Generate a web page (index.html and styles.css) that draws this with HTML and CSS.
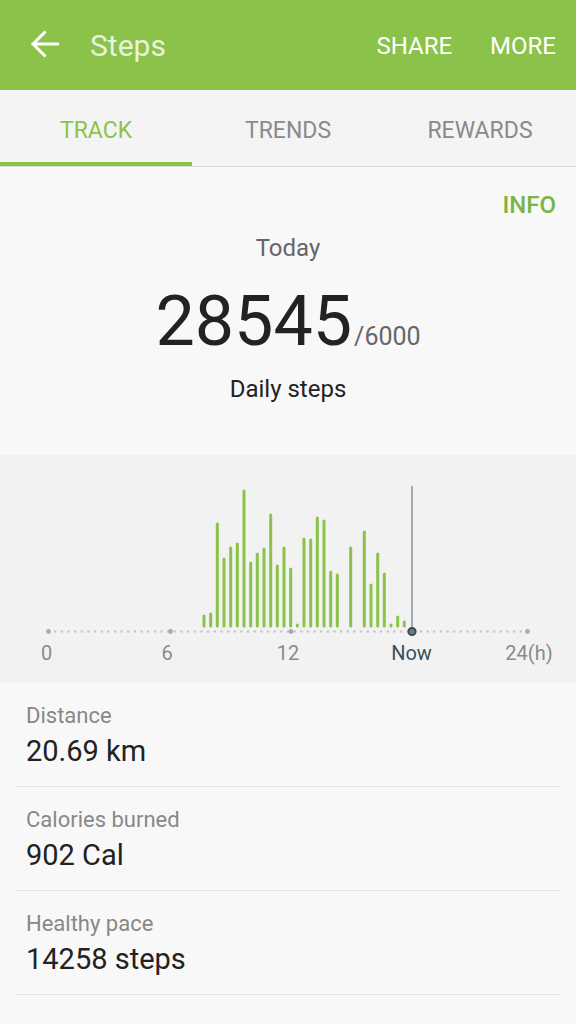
FILE: index.html
```html
<!DOCTYPE html>
<html lang="en">
<head>
<meta charset="utf-8">
<title>Steps</title>
<link rel="stylesheet" href="styles.css">
</head>
<body>
<div class="screen">
  <header class="appbar">
    <svg class="back" width="28" height="28" viewBox="0 0 28 28" aria-hidden="true">
      <path d="M2 13 H27 M13.5 1.5 L2 13 L13.5 24.5" fill="none" stroke="#fff" stroke-width="3" stroke-linecap="square" stroke-linejoin="miter"/>
    </svg>
    <h1 class="title">Steps</h1>
    <nav class="actions">
      <span class="action">SHARE</span>
      <span class="action">MORE</span>
    </nav>
  </header>

  <div class="tabs">
    <div class="tab tab-active">TRACK</div>
    <div class="tab">TRENDS</div>
    <div class="tab">REWARDS</div>
  </div>

  <section class="summary">
    <div class="info">INFO</div>
    <div class="today">Today</div>
    <div class="count"><span class="count-num">28545</span><span class="count-goal">/6000</span></div>
    <div class="count-label">Daily steps</div>
  </section>

  <section class="chart">
    <svg class="chart-svg" width="576" height="228" viewBox="0 455 576 228">
      <line x1="48.5" y1="631.5" x2="527.5" y2="631.5" stroke="#c6c6c6" stroke-width="2.6" stroke-linecap="round" stroke-dasharray="0 6.652"/>
      <circle cx="48.5" cy="631.5" r="2.4" fill="#aaaaaa"/>
      <circle cx="170.5" cy="631.5" r="2.4" fill="#aaaaaa"/>
      <circle cx="291" cy="631.5" r="2.4" fill="#aaaaaa"/>
      <circle cx="527.5" cy="631.5" r="2.4" fill="#aaaaaa"/>
      <g stroke="#8bc34a" stroke-width="3" stroke-linecap="round">
        <line x1="204" y1="626" x2="204" y2="616"/>
        <line x1="210.7" y1="626" x2="210.7" y2="614"/>
        <line x1="217.3" y1="626" x2="217.3" y2="524"/>
        <line x1="224" y1="626" x2="224" y2="559"/>
        <line x1="230.7" y1="626" x2="230.7" y2="548"/>
        <line x1="237.3" y1="626" x2="237.3" y2="544"/>
        <line x1="244" y1="626" x2="244" y2="491"/>
        <line x1="250.7" y1="626" x2="250.7" y2="563"/>
        <line x1="257.3" y1="626" x2="257.3" y2="554"/>
        <line x1="264" y1="626" x2="264" y2="549"/>
        <line x1="270.7" y1="626" x2="270.7" y2="515"/>
        <line x1="277.3" y1="626" x2="277.3" y2="566"/>
        <line x1="284" y1="626" x2="284" y2="548"/>
        <line x1="290.7" y1="626" x2="290.7" y2="569"/>
        <line x1="297.3" y1="626" x2="297.3" y2="625"/>
        <line x1="304" y1="626" x2="304" y2="539"/>
        <line x1="310.7" y1="626" x2="310.7" y2="540"/>
        <line x1="317.3" y1="626" x2="317.3" y2="518"/>
        <line x1="324" y1="626" x2="324" y2="521"/>
        <line x1="330.7" y1="626" x2="330.7" y2="572"/>
        <line x1="337.3" y1="626" x2="337.3" y2="575"/>
        <line x1="350.7" y1="626" x2="350.7" y2="548"/>
        <line x1="364.3" y1="626" x2="364.3" y2="532"/>
        <line x1="371" y1="626" x2="371" y2="585"/>
        <line x1="377.7" y1="626" x2="377.7" y2="554"/>
        <line x1="384.3" y1="626" x2="384.3" y2="574"/>
        <line x1="391" y1="626" x2="391" y2="625"/>
        <line x1="397.7" y1="626" x2="397.7" y2="617"/>
        <line x1="404.3" y1="626" x2="404.3" y2="622"/>
      </g>
      <line x1="412" y1="486" x2="412" y2="630" stroke="#8c979e" stroke-width="1.6"/>
      <circle cx="412" cy="631.5" r="3.6" fill="#6f7c85" stroke="#3b4b56" stroke-width="2"/>
      <g class="axis-labels" font-size="20" text-anchor="middle">
        <text x="46.5" y="660" fill="#8a8a8a">0</text>
        <text x="167" y="660" fill="#8a8a8a">6</text>
        <text x="288" y="660" fill="#8a8a8a">12</text>
        <text x="411.5" y="660" fill="#3d4f5c">Now</text>
        <text x="529" y="660" fill="#8a8a8a">24(h)</text>
      </g>
    </svg>
  </section>

  <section class="stats">
    <div class="stat">
      <div class="stat-label">Distance</div>
      <div class="stat-value">20.69 km</div>
    </div>
    <div class="stat">
      <div class="stat-label">Calories burned</div>
      <div class="stat-value">902 Cal</div>
    </div>
    <div class="stat">
      <div class="stat-label">Healthy pace</div>
      <div class="stat-value">14258 steps</div>
    </div>
  </section>
</div>
</body>
</html>
```

FILE: styles.css
```css
* { box-sizing: border-box; }

html, body {
  margin: 0;
  padding: 0;
  background: #f8f8f8;
  font-family: Roboto, "Noto Sans", "Liberation Sans", sans-serif;
}

.screen {
  width: 576px;
  height: 1024px;
  overflow: hidden;
  background: #f8f8f8;
}

.appbar {
  height: 90px;
  background: #8bc34a;
  display: flex;
  align-items: center;
  padding: 2px 20px 0 31px;
}

.back {
  display: block;
  flex: none;
  margin-top: -2px;
}

.title {
  margin: 0 0 0 31px;
  font-size: 30px;
  font-weight: 400;
  color: rgba(255, 255, 255, 0.82);
  line-height: 36px;
}

.actions {
  margin-left: auto;
  display: flex;
  gap: 38px;
}

.action {
  color: #ffffff;
  font-size: 24px;
  line-height: 30px;
}

.tabs {
  height: 77px;
  display: grid;
  grid-template-columns: repeat(3, 1fr);
  background: #f4f4f4;
  border-bottom: 1px solid #dcdcdc;
}

.tab {
  display: flex;
  align-items: center;
  justify-content: center;
  font-size: 23px;
  color: #8a8a8a;
  padding-top: 5px;
}

.tab-active {
  color: #8bc34a;
  border-bottom: 4px solid #8bc34a;
  padding-top: 9px;
}

.summary {
  height: 288px;
  padding-top: 23px;
  text-align: center;
  background: #f8f8f8;
}

.info {
  text-align: right;
  padding-right: 20px;
  font-size: 24px;
  line-height: 30px;
  font-weight: 500;
  color: #7cb342;
}

.today {
  margin-top: 13px;
  font-size: 24px;
  line-height: 30px;
  color: #666666;
}

.count {
  margin-top: 18px;
  line-height: 80px;
  height: 80px;
  color: #222222;
}

.count-num {
  font-size: 70px;
  font-weight: 400;
}

.count-goal {
  font-size: 25px;
  color: #666666;
  margin-left: 2px;
}

.count-label {
  margin-top: 13px;
  font-size: 24px;
  line-height: 30px;
  color: #222222;
}

.chart {
  height: 228px;
  background: #f2f2f2;
}

.chart-svg {
  display: block;
  font-family: Roboto, "Noto Sans", "Liberation Sans", sans-serif;
}

.stats {
  margin: 0 16px;
}

.stat {
  padding: 19px 0 17px 10px;
  border-bottom: 1px solid #e2e2e2;
}

.stat-label {
  font-size: 22px;
  line-height: 27px;
  color: #888888;
}

.stat-value {
  margin-top: 5px;
  font-size: 29px;
  line-height: 35px;
  color: #222222;
}
```
